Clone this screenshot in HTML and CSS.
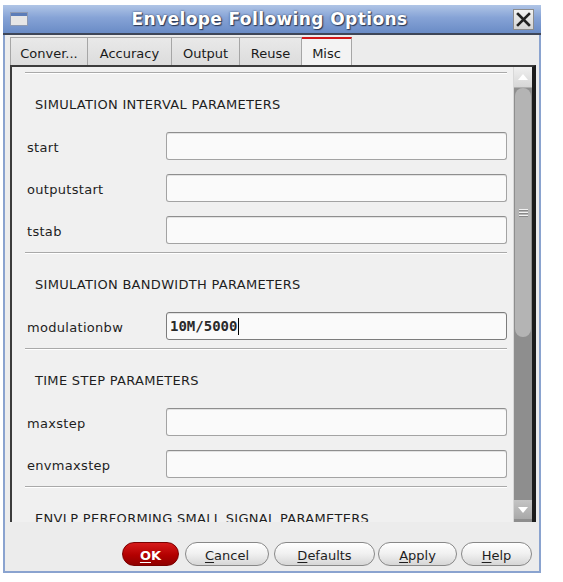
FILE: index.html
```html
<!DOCTYPE html>
<html>
<head>
<meta charset="utf-8">
<link rel="stylesheet" href="styles.css">
</head>
<body>
<div class="window">
  <div class="titlebar">
    <div class="winicon"><div class="winicon-bar"></div></div>
    <div class="title">Envelope Following Options</div>
    <div class="closebtn">
      <svg width="21" height="21" viewBox="0 0 21 21"><path d="M5 5 L16 16 M16 5 L5 16" stroke="#222" stroke-width="2.6" stroke-linecap="square"/></svg>
    </div>
  </div>
  <div class="client">
    <div class="tabs">
      <div class="tab t1">Conver...</div>
      <div class="tab t2">Accuracy</div>
      <div class="tab t3">Output</div>
      <div class="tab t4">Reuse</div>
      <div class="tab t5 active">Misc</div>
    </div>
    <div class="panel">
      <div class="content">
        <div class="section">
          <div class="heading">SIMULATION INTERVAL PARAMETERS</div>
          <div class="row"><div class="label">start</div><div class="field"></div></div>
          <div class="row"><div class="label">outputstart</div><div class="field"></div></div>
          <div class="row"><div class="label">tstab</div><div class="field"></div></div>
        </div>
        <div class="section">
          <div class="heading">SIMULATION BANDWIDTH PARAMETERS</div>
          <div class="row"><div class="label">modulationbw</div><div class="field focus"><span class="value">10M/5000</span><span class="caret"></span></div></div>
        </div>
        <div class="section">
          <div class="heading">TIME STEP PARAMETERS</div>
          <div class="row"><div class="label">maxstep</div><div class="field"></div></div>
          <div class="row"><div class="label">envmaxstep</div><div class="field"></div></div>
        </div>
        <div class="section">
          <div class="heading">ENVLP PERFORMING SMALL SIGNAL PARAMETERS</div>
        </div>
      </div>
      <div class="scrollbar">
        <div class="sb-btn sb-up"><svg width="12" height="8" viewBox="0 0 12 8"><path d="M1 7 L6 1 L11 7 Z" fill="#fff"/></svg></div>
        <div class="sb-thumb"><div class="grip"></div><div class="grip"></div><div class="grip"></div></div>
        <div class="sb-track"></div>
        <div class="sb-btn sb-down"><svg width="12" height="8" viewBox="0 0 12 8"><path d="M1 1 L6 7 L11 1 Z" fill="#fff"/></svg></div>
      </div>
    </div>
    <div class="footer">
      <div class="btn ok"><u>O</u>K</div>
      <div class="btn cancel"><u>C</u>ancel</div>
      <div class="btn defaults"><u>D</u>efaults</div>
      <div class="btn apply"><u>A</u>pply</div>
      <div class="btn help"><u>H</u>elp</div>
    </div>
  </div>
</div>
</body>
</html>
```
FILE: styles.css
```css
body {
  margin: 0;
  background: #ffffff;
  font-family: "DejaVu Sans", "Noto Sans", sans-serif;
  font-size: 13px;
  color: #1e1e1e;
}
.window {
  margin: 5px 0 0 3px;
  width: 538px;
  height: 568px;
  box-sizing: border-box;
  border: 2px solid #8aa3cf;
  border-top: 0;
  background: #ececec;
  display: flex;
  flex-direction: column;
}
.titlebar {
  height: 28px;
  margin: 0 -2px;
  background: linear-gradient(#b0c5e6, #86a3d6 45%, #6a8cc6);
  border-bottom: 2px solid #3e4658;
  display: flex;
  align-items: center;
  padding: 0 7px 0 7px;
  flex: none;
}
.winicon {
  width: 18px;
  height: 14px;
  background: #e6e6e6;
  border: 1px solid #8d9ab3;
  box-sizing: border-box;
}
.winicon-bar {
  height: 3px;
  background: #5c7db8;
}
.title {
  flex: 1;
  text-align: center;
  color: #ffffff;
  font-weight: bold;
  font-size: 17px;
  letter-spacing: 0.4px;
  text-shadow: 0 0 2px #30405e, 1px 1px 1px #2a3550;
  padding-right: 2px;
}
.closebtn {
  width: 21px;
  height: 21px;
  background: linear-gradient(#f2f2f2, #d4d4d4);
  border: 1px solid #8b8b8b;
  box-sizing: border-box;
  display: flex;
  align-items: center;
  justify-content: center;
}
.closebtn svg {
  display: block;
  margin: -1px;
}
.client {
  flex: 1;
  display: flex;
  flex-direction: column;
  padding: 2px 0 0 5px;
}
.tabs {
  display: flex;
  height: 28px;
  flex: none;
}
.tab {
  box-sizing: border-box;
  height: 28px;
  border: 1px solid #a6a6a6;
  border-bottom: 0;
  border-left: 0;
  background: linear-gradient(#e9e9e9, #dcdcdc);
  display: flex;
  align-items: center;
  justify-content: center;
  padding-top: 4px;
  color: #1a1a1a;
}
.t1 { width: 78px; border-left: 1px solid #a6a6a6; }
.t2 { width: 84px; }
.t3 { width: 68px; }
.t4 { width: 62px; }
.t5 { width: 50px; }
.tab.active {
  background: #f3f3f3;
  border-top: 2px solid #d01818;
  padding-top: 2px;
}
.panel {
  height: 457px;
  flex: none;
  box-sizing: border-box;
  width: 526px;
  border-left: 2px solid #3c3c3c;
  border-top: 2px solid #3c3c3c;
  border-right: 4px solid #1c1c1c;
  background: #f0f0f0;
  display: flex;
  overflow: hidden;
}
.content {
  flex: 1;
  overflow: hidden;
  padding: 5px 6px 0 13px;
  letter-spacing: 0.3px;
}
.section {
  border-top: 1px solid #a9a9a9;
  box-shadow: inset 0 1px 0 #ffffff;
  padding-bottom: 8px;
}
.heading {
  margin: 24px 0 19px 10px;
  line-height: 16px;
  height: 16px;
  white-space: nowrap;
}
.row {
  display: flex;
  align-items: center;
  height: 28px;
  margin-bottom: 14px;
}
.row:last-child {
  margin-bottom: 0;
}
.label {
  width: 141px;
  padding-left: 2px;
  box-sizing: border-box;
  flex: none;
  padding-top: 2px;
}
.field {
  width: 341px;
  height: 28px;
  box-sizing: border-box;
  background: #fafafa;
  border: 1px solid #a3a3a3;
  border-top-color: #8e8e8e;
  border-radius: 3px;
  box-shadow: inset 0 1px 0 #e2e2e2;
  display: flex;
  align-items: center;
  padding-left: 3px;
}
.field.focus {
  border-color: #7c7c7c;
}
.value {
  font-family: "DejaVu Sans Mono", monospace;
  font-weight: bold;
  font-size: 14px;
  color: #2a2a2a;
  letter-spacing: 0;
}
.caret {
  width: 1px;
  height: 17px;
  background: #000;
  margin-left: 1px;
}
.scrollbar {
  width: 19px;
  flex: none;
  display: flex;
  flex-direction: column;
  background: #8e8e8e;
  border-left: 1px solid #d8d8d8;
  box-sizing: border-box;
}
.sb-btn {
  height: 19px;
  flex: none;
  display: flex;
  align-items: center;
  justify-content: center;
}
.sb-up {
  background: linear-gradient(#f0f0f0, #d6d6d6);
  border-bottom: 1px solid #b0b0b0;
  height: 20px;
}
.sb-down {
  background: linear-gradient(#c4c4c4, #a9a9a9);
  margin-bottom: 3px;
}
.sb-thumb {
  height: 249px;
  flex: none;
  background: #b4b4b4;
  border-radius: 8px;
  display: flex;
  flex-direction: column;
  align-items: center;
  justify-content: center;
  gap: 2px;
  margin: 0 1px;
}
.grip {
  width: 9px;
  height: 1px;
  background: #f2f2f2;
  box-shadow: 0 1px 0 #888;
}
.sb-track {
  flex: 1;
}
.footer {
  flex: 1;
  display: flex;
  justify-content: flex-end;
  align-items: flex-start;
  padding: 20px 7px 0 0;
}
.btn {
  height: 24px;
  box-sizing: border-box;
  border: 1px solid #888888;
  border-radius: 12px;
  background: linear-gradient(#ffffff, #f0f0f0 50%, #d6d6d6);
  display: flex;
  align-items: center;
  justify-content: center;
  color: #1e1e1e;
  padding-top: 2px;
}
.btn u {
  text-decoration-thickness: 1px;
  text-underline-offset: 2px;
}
.ok {
  width: 57px;
  background: linear-gradient(#d61a1a, #b30000 55%, #8f0000);
  border-color: #7a0000;
  color: #ffffff;
  font-weight: bold;
  margin-right: 6px;
}
.cancel { width: 84px; margin-right: 5px; }
.defaults { width: 101px; margin-right: 3px; }
.apply { width: 79px; margin-right: 4px; }
.help { width: 71px; }
```
